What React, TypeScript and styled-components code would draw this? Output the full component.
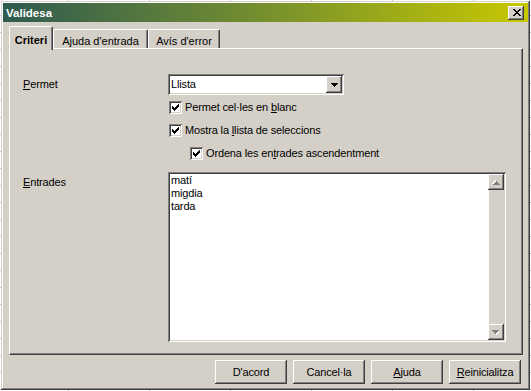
import React from 'react';
import styled, { createGlobalStyle } from 'styled-components';

const FACE = '#d4d0c8';

const GlobalStyle = createGlobalStyle`
  html, body {
    margin: 0;
    padding: 0;
  }
  body {
    width: 531px;
    height: 391px;
    overflow: hidden;
    background-color: #fff;
    background-image:
      linear-gradient(90deg, #c6c6c6 1px, transparent 1px),
      linear-gradient(#c6c6c6 1px, transparent 1px);
    background-size: 81px 17px;
    background-position: 68px 0, 0 15px;
    font-family: 'Liberation Sans', Arial, sans-serif;
    font-size: 11px;
    letter-spacing: -0.15px;
    color: #000;
  }
`;

const raised = `
  box-shadow:
    inset -1px -1px 0 #404040,
    inset 1px 1px 0 #fff,
    inset -2px -2px 0 #808080,
    inset 2px 2px 0 ${FACE};
`;

const sunken = `
  box-shadow:
    inset 1px 1px 0 #808080,
    inset -1px -1px 0 #fff,
    inset 2px 2px 0 #404040,
    inset -2px -2px 0 ${FACE};
`;

const Window = styled.div`
  margin: 1px 0 0 1px;
  width: 529px;
  height: 389px;
  box-sizing: border-box;
  padding: 2px;
  background: ${FACE};
  box-shadow:
    inset -1px -1px 0 #404040,
    inset 1px 1px 0 ${FACE},
    inset -2px -2px 0 #808080,
    inset 2px 2px 0 #fff;
  display: flex;
  flex-direction: column;
`;

const TitleBar = styled.div`
  flex: none;
  height: 19px;
  display: flex;
  align-items: center;
  justify-content: space-between;
  padding: 0 4px 0 3px;
  background: linear-gradient(90deg, #2e5a50 0%, #76902e 50%, #c8c800 100%);
  color: #fff;
  font-weight: bold;
  font-size: 11.5px;
  letter-spacing: 0;
`;

const CloseButton = styled.div`
  width: 16px;
  height: 14px;
  background: ${FACE};
  box-shadow:
    inset -1px -1px 0 #404040,
    inset 1px 1px 0 #fff,
    inset -2px -2px 0 #808080;
  display: flex;
  align-items: center;
  justify-content: center;
  padding-left: 1px;
  box-sizing: border-box;
`;

const Body = styled.div`
  flex: 1;
  display: flex;
  flex-direction: column;
  padding: 4px 5px 0 6px;
`;

const TabStrip = styled.div`
  display: flex;
  align-items: flex-end;
  height: 22px;
  position: relative;
  z-index: 1;
`;

const Tab = styled.div<{ $active?: boolean; $w: number }>`
  width: ${(p) => p.$w}px;
  height: ${(p) => (p.$active ? 24 : 19)}px;
  margin-bottom: ${(p) => (p.$active ? -2 : 0)}px;
  box-sizing: border-box;
  background: ${FACE};
  border-top: 1px solid #fff;
  border-left: 1px solid #fff;
  border-right: 1px solid #404040;
  border-radius: 2px 2px 0 0;
  box-shadow: inset -1px 0 0 #808080;
  display: flex;
  justify-content: center;
  align-items: flex-start;
  padding-top: ${(p) => (p.$active ? 7 : 5)}px;
  line-height: 13px;
  font-weight: ${(p) => (p.$active ? 'bold' : 'normal')};
  letter-spacing: 0;
  white-space: nowrap;
`;

const Panel = styled.div`
  height: 307px;
  box-sizing: border-box;
  border-top: 1px solid #fff;
  border-left: 1px solid #fff;
  border-right: 1px solid #404040;
  border-bottom: 1px solid #404040;
  box-shadow: inset -1px -1px 0 #808080;
  padding: 24px 0 0 13px;
  display: grid;
  grid-template-columns: 145px 1fr;
  row-gap: 7px;
  align-content: start;
`;

const Label = styled.div<{ $top: number }>`
  padding-top: ${(p) => p.$top}px;
  line-height: 13px;
`;

const Controls = styled.div`
  display: flex;
  flex-direction: column;
`;

const Row = styled.div<{ $indent?: number }>`
  height: 23px;
  display: flex;
  align-items: center;
  padding-left: ${(p) => p.$indent ?? 0}px;
`;

const Select = styled.div`
  width: 176px;
  height: 21px;
  box-sizing: border-box;
  padding: 2px;
  background: #fff;
  ${sunken}
  display: flex;
  align-items: stretch;
`;

const SelectValue = styled.div`
  flex: 1;
  line-height: 17px;
  padding-left: 1px;
`;

const ArrowButton = styled.div`
  width: 16px;
  background: ${FACE};
  ${raised}
  display: flex;
  align-items: center;
  justify-content: center;
`;

const CheckBox = styled.div`
  width: 13px;
  height: 13px;
  flex: none;
  background: #fff;
  ${sunken}
  margin-left: 1px;
  margin-right: 3px;
`;

const CheckText = styled.span`
  line-height: 13px;
  white-space: nowrap;
`;

const ListBox = styled.div`
  width: 338px;
  height: 170px;
  box-sizing: border-box;
  padding: 2px;
  background: #fff;
  ${sunken}
  display: flex;
`;

const ListItems = styled.div`
  flex: 1;
  padding-left: 1px;
  line-height: 13px;
`;

const ScrollBar = styled.div`
  width: 16px;
  display: flex;
  flex-direction: column;
`;

const ScrollButton = styled.div`
  height: 16px;
  flex: none;
  background: ${FACE};
  ${raised}
  display: flex;
  align-items: center;
  justify-content: center;
`;

const ScrollTrack = styled.div`
  flex: 1;
  background: ${FACE};
  box-shadow: inset 1px 0 0 #fff;
`;

const ButtonRow = styled.div`
  display: flex;
  justify-content: flex-end;
  gap: 6px;
  margin-top: 5px;
  padding-right: 2px;
`;

const PushButton = styled.div`
  width: 72px;
  height: 24px;
  box-sizing: border-box;
  background: ${FACE};
  ${raised}
  display: flex;
  align-items: center;
  justify-content: center;
  line-height: 13px;
  white-space: nowrap;
`;

const CloseGlyph = () => (
  <svg width="8" height="7" viewBox="0 0 8 7" shapeRendering="crispEdges">
    <path
      fill="#000"
      d="M0 0h2v1H0zM6 0h2v1H6zM1 1h2v1H1zM5 1h2v1H5zM2 2h4v1H2zM3 3h2v1H3zM2 4h4v1H2zM1 5h2v1H1zM5 5h2v1H5zM0 6h2v1H0zM6 6h2v1H6z"
    />
  </svg>
);

const DownArrow = ({ color = '#000' }: { color?: string }) => (
  <svg width="7" height="4" viewBox="0 0 7 4" shapeRendering="crispEdges">
    <path fill={color} d="M0 0h7v1H0zM1 1h5v1H1zM2 2h3v1H2zM3 3h1v1H3z" />
  </svg>
);

const DisabledArrow = ({ up }: { up?: boolean }) => (
  <svg
    width="8"
    height="5"
    viewBox="0 0 8 5"
    shapeRendering="crispEdges"
    style={up ? { transform: 'rotate(180deg)' } : undefined}
  >
    <path fill="#fff" d="M1 1h7v1H1zM2 2h5v1H2zM3 3h3v1H3zM4 4h1v1H4z" />
    <path fill="#808080" d="M0 0h7v1H0zM1 1h5v1H1zM2 2h3v1H2zM3 3h1v1H3z" />
  </svg>
);

const CheckMark = () => (
  <svg width="13" height="13" viewBox="0 0 13 13" shapeRendering="crispEdges">
    <path
      fill="#000"
      d="M3 5h1v3H3zM4 6h1v3H4zM5 7h1v3H5zM6 6h1v3H6zM7 5h1v3H7zM8 4h1v3H8zM9 3h1v3H9z"
    />
  </svg>
);

function Check({ children, indent }: { children: React.ReactNode; indent?: number }) {
  return (
    <Row $indent={indent}>
      <CheckBox>
        <CheckMark />
      </CheckBox>
      <CheckText>{children}</CheckText>
    </Row>
  );
}

const entries = ['matí', 'migdia', 'tarda'];

export default function App() {
  return (
    <>
      <GlobalStyle />
      <Window>
        <TitleBar>
          <span>Validesa</span>
          <CloseButton>
            <CloseGlyph />
          </CloseButton>
        </TitleBar>
        <Body>
          <TabStrip>
            <Tab $active $w={44}>
              Criteri
            </Tab>
            <Tab $w={95}>Ajuda d'entrada</Tab>
            <Tab $w={72}>Avís d'error</Tab>
          </TabStrip>
          <Panel>
            <Label $top={5}>
              <u>P</u>ermet
            </Label>
            <Controls>
              <Row>
                <Select>
                  <SelectValue>Llista</SelectValue>
                  <ArrowButton>
                    <DownArrow />
                  </ArrowButton>
                </Select>
              </Row>
              <Check>
                Permet cel·les en <u>b</u>lanc
              </Check>
              <Check>
                Mostra la <u>l</u>lista de seleccions
              </Check>
              <Check indent={21}>
                Ordena les en<u>t</u>rades ascendentment
              </Check>
            </Controls>
            <Label $top={4}>
              <u>E</u>ntrades
            </Label>
            <ListBox>
              <ListItems>
                {entries.map((e) => (
                  <div key={e}>{e}</div>
                ))}
              </ListItems>
              <ScrollBar>
                <ScrollButton>
                  <DisabledArrow up />
                </ScrollButton>
                <ScrollTrack />
                <ScrollButton>
                  <DisabledArrow />
                </ScrollButton>
              </ScrollBar>
            </ListBox>
          </Panel>
          <ButtonRow>
            <PushButton>D'acord</PushButton>
            <PushButton>Cancel·la</PushButton>
            <PushButton>
              <u>A</u>juda
            </PushButton>
            <PushButton>
              <u>R</u>einicialitza
            </PushButton>
          </ButtonRow>
        </Body>
      </Window>
    </>
  );
}
